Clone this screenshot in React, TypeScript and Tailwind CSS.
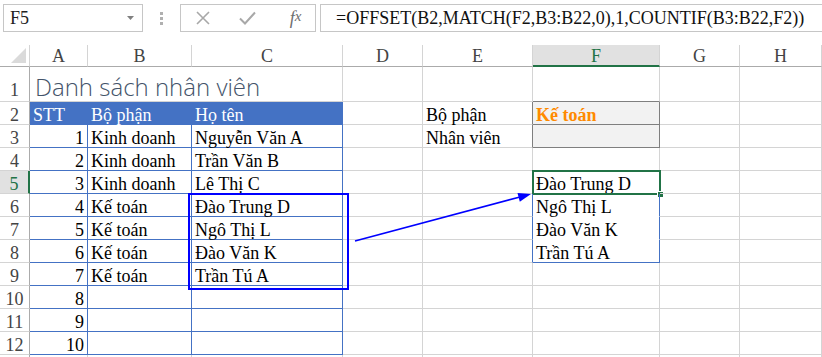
import React from 'react';

const COLS = ['A', 'B', 'C', 'D', 'E', 'F', 'G', 'H'];

const staff = [
  ['1', 'Kinh doanh', 'Nguyễn Văn A'],
  ['2', 'Kinh doanh', 'Trần Văn B'],
  ['3', 'Kinh doanh', 'Lê Thị C'],
  ['4', 'Kế toán', 'Đào Trung D'],
  ['5', 'Kế toán', 'Ngô Thị L'],
  ['6', 'Kế toán', 'Đào Văn K'],
  ['7', 'Kế toán', 'Trần Tú A'],
  ['8', '', ''],
  ['9', '', ''],
  ['10', '', ''],
];

const result = ['Đào Trung D', 'Ngô Thị L', 'Đào Văn K', 'Trần Tú A'];

// border colour classes, written out so tailwind picks them up
const rGrid = 'border-r-[#d4d4d4]';
const bGrid = 'border-b-[#d4d4d4]';
const rBlue = 'border-r-[#4472c4]';
const bBlue = 'border-b-[#4472c4]';
const rDark = 'border-r-[#7f7f7f]';
const bDark = 'border-b-[#7f7f7f]';
const bWhite = 'border-b-white';

const borders = (r: number, c: number) => {
  let right = rGrid;
  let bottom = bGrid;
  if (r >= 2 && r <= 12 && c <= 3) {
    right = rBlue;
    bottom = bBlue;
  }
  if (r === 1 && c === 6) bottom = bDark;
  if ((r === 2 || r === 3) && c === 5) right = rDark;
  if ((r === 2 || r === 3) && c === 6) {
    right = rDark;
    bottom = bDark;
  }
  if (r === 4 && c === 6) bottom = bBlue;
  if (r >= 5 && r <= 8 && c === 5) right = rBlue;
  if (r >= 5 && r <= 8 && c === 6) {
    right = rBlue;
    bottom = r === 8 ? bBlue : bWhite;
  }
  return `${right} ${bottom}`;
};

const content = (r: number, c: number): React.ReactNode => {
  if (r === 2) {
    if (c === 1) return 'STT';
    if (c === 2) return 'Bộ phận';
    if (c === 3) return 'Họ tên';
    if (c === 5) return 'Bộ phận';
    if (c === 6) return <span className="font-bold text-[#ff8a00]">Kế toán</span>;
  }
  if (r === 3 && c === 5) return 'Nhân viên';
  if (r >= 3 && r <= 12 && c <= 3) return staff[r - 3][c - 1];
  if (c === 6 && r >= 5 && r <= 8) return result[r - 5];
  return null;
};

const NameBox = () => (
  <div className="flex h-[28px] w-[140px] items-center justify-between border border-[#c6c6c6] pl-[6px] pr-[8px]">
    <span className="font-['Liberation_Serif',serif] text-[18px] leading-none text-[#222]">F5</span>
    <svg width="7" height="4" viewBox="0 0 7 4">
      <path d="M0 0h7L3.5 4z" fill="#808080" />
    </svg>
  </div>
);

const FormulaBar = () => (
  <div className="flex h-[45px] items-start pl-[3px] pt-[4px]">
    <NameBox />
    <div className="ml-[17px] mr-[17px] flex h-[28px] flex-col justify-center gap-[2px]">
      <div className="h-[3px] w-[3px] bg-[#b0b0b0]" />
      <div className="h-[3px] w-[3px] bg-[#b0b0b0]" />
      <div className="h-[3px] w-[3px] bg-[#b0b0b0]" />
    </div>
    <div className="grid h-[28px] w-[136px] grid-cols-3 items-center border border-[#c6c6c6]">
      <div className="flex justify-center">
        <svg width="14" height="14" viewBox="0 0 14 14">
          <path d="M1 1l12 12M13 1L1 13" stroke="#a8a8a8" strokeWidth="1.6" fill="none" />
        </svg>
      </div>
      <div className="flex justify-center">
        <svg width="17" height="14" viewBox="0 0 17 14">
          <path d="M1 7.5l5 5L16 1.5" stroke="#a8a8a8" strokeWidth="2" fill="none" />
        </svg>
      </div>
      <div className="flex justify-center pl-[6px] text-[18px] italic leading-none text-[#6e6e6e]">
        <span>f</span>
        <span className="text-[15px]">x</span>
      </div>
    </div>
    <div className="ml-[4px] flex h-[28px] flex-1 items-center border-y border-l border-[#c6c6c6] pl-[15px] text-[18px] whitespace-nowrap text-[#111]">
      =OFFSET(B2,MATCH(F2,B3:B22,0),1,COUNTIF(B3:B22,F2))
    </div>
  </div>
);

const Sheet = () => {
  const rows = Array.from({ length: 13 }, (_, i) => i + 1);
  return (
    <div className="grid grid-cols-[30px_58px_104px_151px_80px_110px_127px_80px_82px] grid-rows-[22px_35px_repeat(12,23px)]">
      {/* corner */}
      <div className="flex items-end justify-end border-r border-b border-r-[#d4d4d4] border-b-[#ababab] pr-[3px] pb-[3px]">
        <svg width="15" height="15" viewBox="0 0 15 15">
          <path d="M15 0v15H0z" fill="#dadada" />
        </svg>
      </div>
      {COLS.map((col) =>
        col === 'F' ? (
          <div
            key={col}
            className="flex items-end justify-center border-r border-b-2 border-r-[#d4d4d4] border-b-[#217346] bg-[#e1e1e1] leading-[18px] text-[#217346]"
          >
            {col}
          </div>
        ) : (
          <div
            key={col}
            className="flex items-end justify-center border-r border-b border-r-[#d4d4d4] border-b-[#ababab] pb-[1px] leading-[18px] text-[#444]"
          >
            {col}
          </div>
        )
      )}

      {rows.map((r) => (
        <React.Fragment key={r}>
          {r === 5 ? (
            <div className="flex items-end justify-center border-r-2 border-b border-r-[#217346] border-b-[#d4d4d4] bg-[#e1e1e1] leading-[18px] text-[#217346]">
              {r}
            </div>
          ) : (
            <div
              className={`flex items-end justify-center border-r border-b border-r-[#ababab] border-b-[#d4d4d4] leading-[18px] text-[#444] ${
                r === 1 ? 'pb-[2px]' : ''
              }`}
            >
              {/* row 13 is only a sliver at the bottom edge */}
              {r < 13 ? r : null}
            </div>
          )}

          {r === 1 ? (
            <>
              <div className="col-span-3 flex items-end border-r border-b border-r-[#d4d4d4] border-b-[#d4d4d4] pl-[5px] font-['Open_Sans',sans-serif] text-[24px] font-light leading-[28px] text-[#44546a]">
                Danh sách nhân viên
              </div>
              {[4, 5, 6, 7, 8].map((c) => (
                <div key={c} className={`border-r border-b ${borders(r, c)}`} />
              ))}
            </>
          ) : (
            COLS.map((_, i) => {
              const c = i + 1;
              const header = r === 2 && c <= 3;
              const input = (r === 2 || r === 3) && c === 6;
              return (
                <div
                  key={c}
                  className={`relative flex items-end whitespace-nowrap border-r border-b px-[3px] leading-[18px] ${borders(r, c)} ${
                    c === 1 && r >= 3 ? 'justify-end' : ''
                  } ${header ? 'bg-[#4472c4] text-white' : 'text-black'} ${input ? 'bg-[#f2f2f2]' : ''}`}
                >
                  {content(r, c)}
                  {r === 5 && c === 6 && (
                    <div className="absolute -top-[1px] -right-[2px] -bottom-[2px] -left-[1px] border-2 border-[#217346]">
                      <div className="absolute -right-[5px] -bottom-[5px] h-[7px] w-[7px] border border-white bg-[#217346]" />
                    </div>
                  )}
                </div>
              );
            })
          )}
        </React.Fragment>
      ))}
    </div>
  );
};

export default function App() {
  return (
    <div className="relative h-[357px] w-[822px] overflow-hidden bg-white font-['Liberation_Serif',serif] text-[18px]">
      <FormulaBar />
      <Sheet />

      {/* box around C6:C9 */}
      <div className="absolute top-[193px] left-[188px] h-[97px] w-[161px] border-2 border-[#0000ff]" />

      {/* arrow to F5 */}
      <svg className="pointer-events-none absolute inset-0" width="822" height="357">
        <line x1="355" y1="241" x2="520" y2="197" stroke="#0000ff" strokeWidth="1.6" />
        <polygon points="531,194 519.8,201.8 517.5,193" fill="#0000ff" />
      </svg>
    </div>
  );
}
